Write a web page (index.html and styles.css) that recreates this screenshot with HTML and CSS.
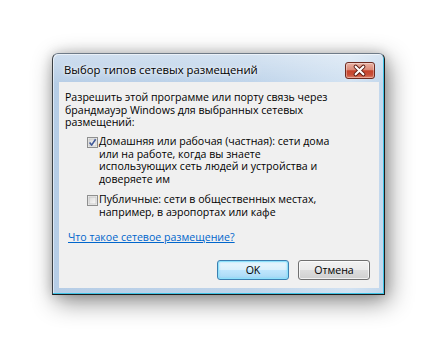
FILE: index.html
```html
<!DOCTYPE html>
<html lang="ru">
<head>
<meta charset="utf-8">
<title>Выбор типов сетевых размещений</title>
<link rel="stylesheet" href="styles.css">
</head>
<body>
<div class="stage">
  <div class="window">
    <div class="titlebar">
      <span class="title">Выбор типов сетевых размещений</span>
      <span class="close">
        <svg width="30" height="17" viewBox="0 0 30 17">
          <path d="M11 4.5 L19 12.5 M19 4.5 L11 12.5" stroke="#5b1d14" stroke-width="4.2" stroke-linecap="round" fill="none"/>
          <path d="M11 4.5 L19 12.5 M19 4.5 L11 12.5" stroke="#ffffff" stroke-width="2.2" stroke-linecap="round" fill="none"/>
        </svg>
      </span>
    </div>
    <div class="client">
      <p class="intro">Разрешить этой программе или порту связь через<br>брандмауэр Windows для выбранных сетевых<br>размещений:</p>
      <div class="option first">
        <span class="cb">
          <svg width="11" height="11" viewBox="0 0 11 11">
            <defs>
              <linearGradient id="cbg1" x1="0" y1="0" x2="1" y2="1">
                <stop offset="0" stop-color="#d9d9d9"/>
                <stop offset="1" stop-color="#fbfbfb"/>
              </linearGradient>
            </defs>
            <rect x="0.5" y="0.5" width="10" height="10" fill="#f4f4f4" stroke="#8e8f8f"/>
            <rect x="2" y="2" width="7" height="7" fill="url(#cbg1)" stroke="#c2c2c2" stroke-width="0.8"/>
            <path d="M2.6 5.6 L4.6 8.1 L8.6 2.2" stroke="#3f5898" stroke-width="1.6" fill="none" stroke-linejoin="round"/>
          </svg>
        </span>
        <span class="label">Домашняя или рабочая (частная): сети дома<br>или на работе, когда вы знаете<br>использующих сеть людей и устройства и<br>доверяете им</span>
      </div>
      <div class="option second">
        <span class="cb">
          <svg width="11" height="11" viewBox="0 0 11 11">
            <defs>
              <linearGradient id="cbg2" x1="0" y1="0" x2="1" y2="1">
                <stop offset="0" stop-color="#d9d9d9"/>
                <stop offset="1" stop-color="#fbfbfb"/>
              </linearGradient>
            </defs>
            <rect x="0.5" y="0.5" width="10" height="10" fill="#f4f4f4" stroke="#8e8f8f"/>
            <rect x="2" y="2" width="7" height="7" fill="url(#cbg2)" stroke="#c2c2c2" stroke-width="0.8"/>
          </svg>
        </span>
        <span class="label">Публичные: сети в общественных местах,<br>например, в аэропортах или кафе</span>
      </div>
      <a class="link" href="#">Что такое сетевое размещение?</a>
      <div class="buttons">
        <span class="btn default">OK</span>
        <span class="btn">Отмена</span>
      </div>
    </div>
  </div>
</div>
</body>
</html>
```

FILE: styles.css
```css
html, body {
  margin: 0;
  padding: 0;
  background: #ffffff;
  width: 438px;
  height: 348px;
  overflow: hidden;
  font-family: "Open Sans", "Noto Sans", sans-serif;
}

.stage {
  padding: 53px 0 0 52px;
}

.window {
  box-sizing: border-box;
  width: 333px;
  height: 242px;
  border: 1px solid #1c1c1c;
  border-top-color: #6f7b88;
  border-left-color: #3a3f44;
  border-radius: 6px 6px 0 0;
  background:
    linear-gradient(180deg, rgba(255,255,255,0.35) 0px, rgba(255,255,255,0) 30px),
    linear-gradient(90deg, #b6cde6 0%, #bfd4ea 60%, #d2e2f2 90%, #c2d7ec 100%);
  box-shadow: 4px 7px 24px rgba(0,0,0,0.45), 0 0 12px rgba(0,0,0,0.18), inset -1px -1px 0 #3ec3e6, inset 1px 1px 0 rgba(255,255,255,0.55);
  display: flex;
  flex-direction: column;
  padding: 0 5px 6px 6px;
}

.titlebar {
  height: 28px;
  display: flex;
  justify-content: space-between;
  align-items: flex-start;
}

.title {
  margin: 9px 0 0 5px;
  font-size: 11.3px;
  line-height: 14px;
  color: #000;
  text-shadow: 0 0 6px rgba(255,255,255,0.9), 0 0 3px rgba(255,255,255,0.8);
}

.close {
  margin: 8px 4px 0 0;
  width: 30px;
  height: 17px;
  box-sizing: border-box;
  border: 1px solid #6e2a20;
  border-radius: 3px;
  background: linear-gradient(180deg, #eab3a5 0%, #db8a78 45%, #c5432c 52%, #c9503a 80%, #e0846c 100%);
  box-shadow: inset 0 0 0 1px rgba(255,255,255,0.35);
  display: flex;
}

.close svg {
  margin: -1px 0 0 -1px;
}

.client {
  flex: 1;
  background: #f0f0f0;
  display: flex;
  flex-direction: column;
  align-items: flex-start;
  padding: 9px 9px 8px 6px;
  font-size: 10.6px;
  line-height: 12.5px;
  color: #000;
}

.intro {
  margin: 0;
}

.option {
  display: flex;
  align-items: flex-start;
  margin-left: 22px;
  gap: 1px;
}

.option.first {
  margin-top: 6.5px;
}

.option.second {
  margin-top: 8px;
}

.cb {
  display: flex;
  margin-top: 2px;
  width: 11px;
  height: 11px;
}

.link {
  margin: 13px 0 0 3px;
  color: #0066cc;
  text-decoration: underline;
}

.buttons {
  margin-top: auto;
  align-self: stretch;
  display: flex;
  justify-content: flex-end;
  gap: 9px;
}

.btn {
  box-sizing: border-box;
  width: 72px;
  height: 20px;
  border: 1px solid #707070;
  border-radius: 3px;
  background: linear-gradient(180deg, #f2f2f2 0%, #ebebeb 48%, #dddddd 52%, #cfcfcf 100%);
  box-shadow: inset 0 0 0 1px rgba(255,255,255,0.7);
  display: flex;
  align-items: center;
  justify-content: center;
  font-size: 10.6px;
  color: #000;
}

.btn.default {
  border-color: #3c7fb1;
  background: linear-gradient(180deg, #eaf6fd 0%, #d9f0fc 48%, #bee6fd 52%, #a7d9f5 100%);
  box-shadow: inset 0 0 0 1px #8ee1fb, inset 0 0 2px 1px rgba(94,208,248,0.6);
}
```
